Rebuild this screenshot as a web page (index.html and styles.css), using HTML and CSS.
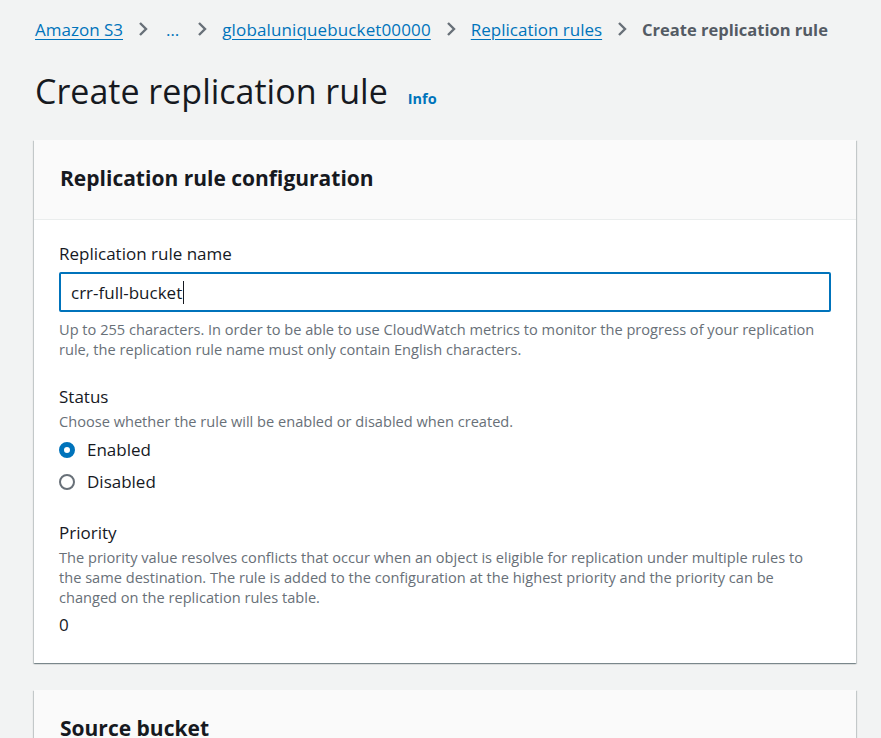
FILE: index.html
```html
<!DOCTYPE html>
<html>
<head>
<meta charset="utf-8">
<link rel="stylesheet" href="styles.css">
</head>
<body>
<div class="page">
  <nav class="crumbs">
    <a class="crumb-link" href="#">Amazon S3</a>
    <svg class="chev" viewBox="0 0 12 16"><path d="M3 2l6 6-6 6" /></svg>
    <a class="crumb-dots" href="#">…</a>
    <svg class="chev" viewBox="0 0 12 16"><path d="M3 2l6 6-6 6" /></svg>
    <a class="crumb-link wide" href="#">globaluniquebucket00000</a>
    <svg class="chev" viewBox="0 0 12 16"><path d="M3 2l6 6-6 6" /></svg>
    <a class="crumb-link" href="#">Replication rules</a>
    <svg class="chev" viewBox="0 0 12 16"><path d="M3 2l6 6-6 6" /></svg>
    <span class="crumb-current">Create replication rule</span>
  </nav>

  <div class="title-row">
    <h1 class="title">Create replication rule</h1>
    <a class="info" href="#">Info</a>
  </div>

  <section class="card">
    <div class="card-head"><h2 class="card-title">Replication rule configuration</h2></div>
    <div class="card-body">
      <div class="field">
        <div class="label">Replication rule name</div>
        <div class="input"><span>crr-full-bucket</span><span class="caret"></span></div>
        <div class="hint">Up to 255 characters. In order to be able to use CloudWatch metrics to monitor the progress of your replication rule, the replication rule name must only contain English characters.</div>
      </div>
      <div class="field">
        <div class="label">Status</div>
        <div class="desc">Choose whether the rule will be enabled or disabled when created.</div>
        <div class="radios">
          <div class="radio"><span class="dot on"></span><span>Enabled</span></div>
          <div class="radio"><span class="dot"></span><span>Disabled</span></div>
        </div>
      </div>
      <div class="field">
        <div class="label">Priority</div>
        <div class="desc">The priority value resolves conflicts that occur when an object is eligible for replication under multiple rules to the same destination. The rule is added to the configuration at the highest priority and the priority can be changed on the replication rules table.</div>
        <div class="value">0</div>
      </div>
    </div>
  </section>

  <section class="card">
    <div class="card-head"><h2 class="card-title">Source bucket</h2></div>
  </section>
</div>
</body>
</html>
```

FILE: styles.css
```css
html, body {
  margin: 0;
  padding: 0;
  background: #f2f3f3;
  font-family: "Open Sans", "Noto Sans", sans-serif;
  color: #16191f;
  overflow: hidden;
}
.page {
  padding: 15px 25px 0 34px;
}
.crumbs {
  display: flex;
  align-items: center;
  gap: 14px;
  height: 28px;
  font-size: 17px;
  margin-left: 1px;
}
.crumb-link {
  color: #0073bb;
  text-decoration: underline;
  text-underline-offset: 3px;
}
.crumb-link.wide {
  letter-spacing: 0.13px;
}
.crumb-dots {
  color: #0073bb;
  text-decoration: none;
  padding: 0 3px;
}
.crumb-current {
  color: #545b64;
  font-weight: 700;
  font-size: 16.5px;
}
.chev {
  width: 12px;
  height: 16px;
  fill: none;
  stroke: #687078;
  stroke-width: 2.4;
}
.title-row {
  display: flex;
  align-items: baseline;
  gap: 20px;
  margin: 17px 0 0 1px;
  height: 80px;
}
.title {
  margin: 0;
  font-size: 34px;
  font-weight: 400;
  line-height: 62px;
}
.info {
  color: #0073bb;
  font-weight: 700;
  font-size: 14.5px;
  text-decoration: none;
}
.card {
  background: #fff;
  box-shadow: 0 1px 1px 0 rgba(0,28,36,.3), 1px 1px 1px 0 rgba(0,28,36,.15), -1px 1px 1px 0 rgba(0,28,36,.15);
  margin-bottom: 27px;
}
.card-head {
  box-sizing: border-box;
  background: #fafafa;
  border-bottom: 1px solid #eaeded;
  height: 80px;
  display: flex;
  align-items: center;
  padding: 0 26px 4px;
}
.card-title {
  margin: 0;
  font-size: 21px;
  font-weight: 700;
}
.card-body {
  padding: 20px 25px 26px 25px;
}
.field + .field {
  margin-top: 24px;
}
.label {
  font-size: 17px;
  line-height: 28px;
}
.input {
  margin-top: 4px;
  height: 36px;
  border: 2px solid #0073bb;
  border-radius: 2px;
  display: flex;
  align-items: center;
  padding: 0 10px;
  font-size: 17px;
}
.caret {
  display: inline-block;
  width: 1px;
  height: 23px;
  background: #16191f;
  margin-left: 1px;
}
.hint, .desc {
  font-size: 14.6px;
  line-height: 20px;
  color: #687078;
  max-width: 765px;
}
.hint { margin-top: 7px; }
.radios {
  margin: 6px 0 2px;
  display: flex;
  flex-direction: column;
  gap: 6px;
}
.radio {
  display: flex;
  align-items: center;
  gap: 12px;
  font-size: 17px;
  line-height: 26px;
}
.dot {
  box-sizing: border-box;
  width: 16px;
  height: 16px;
  border-radius: 50%;
  border: 2px solid #687078;
  background: #fff;
}
.dot.on {
  border: 5px solid #0073bb;
}
.value {
  margin-top: 6px;
  font-size: 17px;
  line-height: 24px;
}
```
